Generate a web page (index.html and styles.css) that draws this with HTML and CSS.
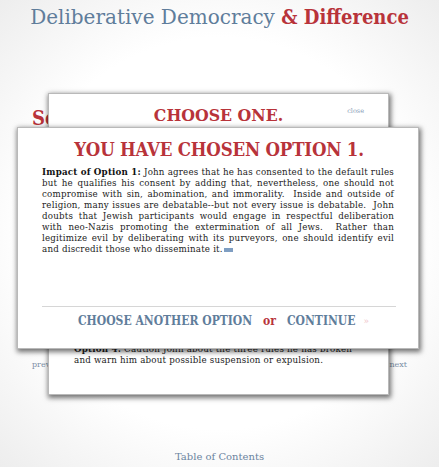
FILE: index.html
```html
<!DOCTYPE html>
<html>
<head>
<meta charset="utf-8">
<link rel="stylesheet" href="styles.css">
</head>
<body>
<header class="site-title"><span class="t-blue">Deliberative Democracy</span> <span class="t-red">&amp; Difference</span></header>
<main class="page">
  <h2 class="section-head">Section 3: Scenario</h2>
  <nav class="pager"><a class="pager-link">prev</a><a class="pager-link">next</a></nav>
</main>
<footer class="toc">Table of Contents</footer>

<div class="modal modal-back">
  <div class="modal-head">
    <h1 class="modal-title">CHOOSE ONE.</h1>
    <a class="close">close</a>
  </div>
  <p class="option-text"><b>Option 4:</b> Caution John about the three rules he has broken<br>and warn him about possible suspension or expulsion.</p>
</div>

<div class="modal modal-front">
  <h1 class="chosen-title">YOU HAVE CHOSEN OPTION 1.</h1>
  <p class="impact"><b>Impact of Option 1:</b> John agrees that he has consented to the default rules but he qualifies his consent by adding that, nevertheless, one should not compromise with sin, abomination, and immorality.&nbsp; Inside and outside of religion, many issues are debatable--but not every issue is debatable.&nbsp; John doubts that Jewish participants would engage in respectful deliberation with neo-Nazis promoting the extermination of all Jews.&nbsp; Rather than legitimize evil by deliberating with its purveyors, one should identify evil and discredit those who disseminate it.<span class="more-icon"></span></p>
  <div class="modal-actions">
    <a class="action">CHOOSE ANOTHER OPTION</a>
    <span class="or">or</span>
    <a class="action">CONTINUE</a>
    <span class="raquo">»</span>
  </div>
</div>
</body>
</html>
```

FILE: styles.css
```css
html, body {
  margin: 0;
  padding: 0;
}
body {
  width: 439px;
  height: 467px;
  overflow: hidden;
  position: relative;
  display: flex;
  flex-direction: column;
  font-family: "DejaVu Serif", serif;
  background: radial-gradient(ellipse 75% 70% at 50% 50%, #ffffff 60%, #ececec 100%);
}
.site-title {
  text-align: center;
  font-size: 20px;
  line-height: 22px;
  padding-top: 6px;
  white-space: nowrap;
}
.t-blue { color: #5f7d9b; font-family: "DejaVu Serif", serif; }
.t-red { color: #b8333a; font-weight: bold; font-family: "DejaVu Serif Condensed", "DejaVu Serif", serif; }

.page {
  flex: 1;
  padding: 0 32px;
  display: flex;
  flex-direction: column;
}
.section-head {
  margin: 78px 0 0 0;
  font-size: 20px;
  line-height: 24px;
  color: #b8333a;
  font-family: "DejaVu Serif Condensed", "DejaVu Serif", serif;
  font-weight: bold;
  white-space: nowrap;
}
.pager {
  display: flex;
  justify-content: space-between;
  margin-top: 230px;
}
.pager-link {
  font-size: 8px;
  color: #7b8fa6;
}
.toc {
  text-align: center;
  font-size: 10px;
  color: #6b84a0;
  padding-bottom: 5px;
}

.modal {
  position: absolute;
  background: #fff;
  border: 1px solid #b9b9b9;
  box-shadow: 1px 2px 5px 1px rgba(0,0,0,0.55);
  box-sizing: border-box;
}
.modal-back {
  left: 48px;
  top: 93px;
  width: 341px;
  height: 302px;
  display: flex;
  flex-direction: column;
  padding: 8px 52px 28px 25px;
}
.modal-head {
  position: relative;
  text-align: center;
  margin-left: -25px;
  margin-right: -52px;
}
.modal-title {
  margin: 0;
  font-size: 17.5px;
  line-height: 26px;
  color: #b8333a;
  font-family: "DejaVu Serif Condensed", "DejaVu Serif", serif;
  font-weight: bold;
}
.close {
  position: absolute;
  right: 24px;
  top: 5px;
  font-size: 6.5px;
  color: #8aa0b8;
}
.option-text {
  margin: auto 0 0 0;
  font-size: 8.7px;
  line-height: 11px;
  letter-spacing: 0.2px;
  color: #1c1c1c;
  white-space: nowrap;
}

.modal-front {
  left: 17px;
  top: 127px;
  width: 402px;
  height: 222px;
  padding: 10px 22px 0 24px;
  display: flex;
  flex-direction: column;
}
.chosen-title {
  margin: 0;
  text-align: center;
  font-size: 18.5px;
  line-height: 24px;
  color: #b8333a;
  font-family: "DejaVu Serif Condensed", "DejaVu Serif", serif;
  font-weight: bold;
  letter-spacing: -0.2px;
}
.impact {
  margin: 5px 0 0 0;
  font-size: 8.7px;
  line-height: 11px;
  letter-spacing: 0.2px;
  color: #1c1c1c;
  text-align: justify;
  padding-right: 2px;
}
.impact b { font-weight: bold; color: #111; }
.more-icon {
  display: inline-block;
  width: 9px;
  height: 4px;
  margin-left: 1px;
  background: #7f9ec2;
  vertical-align: 0;
}
.modal-actions {
  margin-top: auto;
  margin-bottom: 18px;
  border-top: 1px solid #d6d6d6;
  padding-top: 5px;
  display: flex;
  justify-content: center;
  align-items: center;
  gap: 11px;
  font-family: "DejaVu Serif Condensed", "DejaVu Serif", serif;
  font-weight: bold;
  font-size: 12px;
  line-height: 18px;
  padding-left: 9px;
}
.action { color: #5f7d9b; }
.or { color: #b8333a; }
.raquo { color: #f0c8cc; font-weight: normal; font-size: 10px; margin-left: -3px; }
```
